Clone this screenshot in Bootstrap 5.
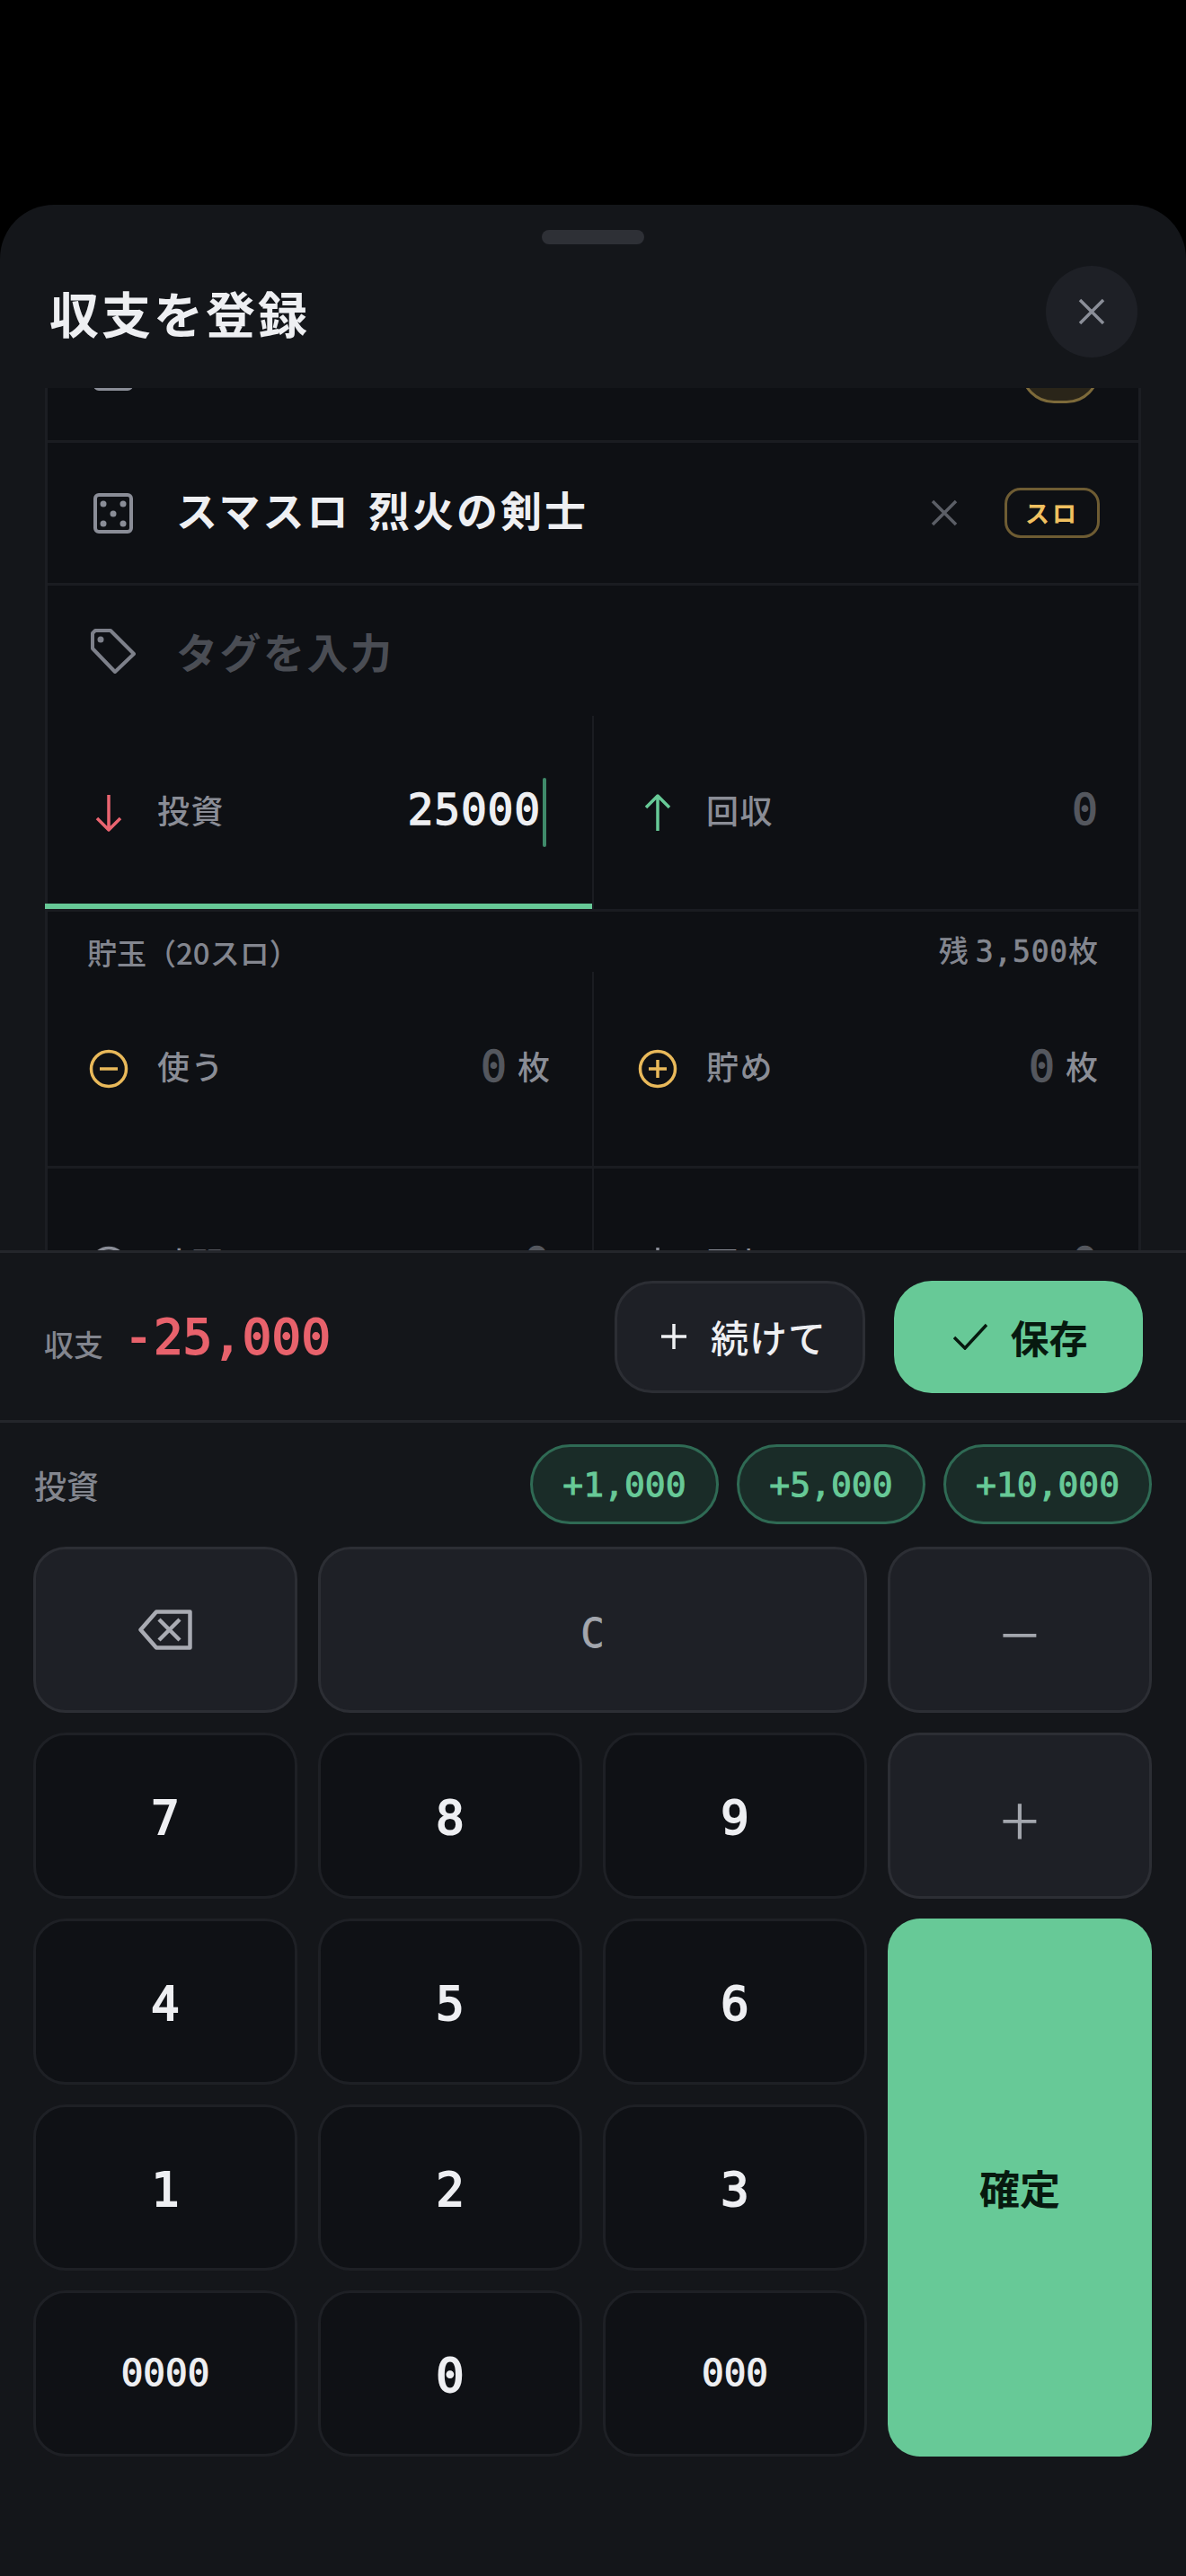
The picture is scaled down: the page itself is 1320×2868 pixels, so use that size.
<!DOCTYPE html>
<html lang="ja">
<head>
  <meta charset="UTF-8" />
  <meta name="viewport" content="width=device-width, initial-scale=1.0"/>
  <title>収支を登録</title>
  <link href="https://cdn.jsdelivr.net/npm/bootstrap@5.3.2/dist/css/bootstrap.min.css" rel="stylesheet">
  <style>
    html, body { height: 100%; }
    body {
      background: #000;
      overflow: hidden;
      font-family: "Noto Sans CJK JP", sans-serif;
      color: #eeeff2;
    }
    .mono { font-family: "DejaVu Sans Mono", "Noto Sans CJK JP", monospace; }

    .sheet {
      margin-top: 228px;
      height: 2640px;
      background: #14161a;
      border-radius: 60px 60px 0 0;
    }
    .grabber { width: 114px; height: 16px; margin: 28px auto 0; background: #2e3036; border-radius: 8px; }
    .sheet-head { height: 160px; padding: 24px 54px 0 55px; }
    .sheet-title { font-size: 55px; font-weight: 700; letter-spacing: 3px; line-height: 65px; margin: 19px 0 0; }
    .close-circle { width: 102px; height: 102px; border-radius: 50%; background: #1e2026; border: 0; padding: 0; }

    .scroller { height: 960px; overflow: hidden; padding: 0 50px; }
    .entry-card {
      margin-top: -98px;
      background: #0e1014;
      border-left: 3px solid #1c1e23;
      border-right: 3px solid #1c1e23;
    }
    .entry-row { height: 159px; border-bottom: 3px solid #1a1c21; padding: 0 43px 0 51px; }
    .entry-row .row-icon { width: 44px; flex: none; margin-right: 48px; }
    .game-name { font-size: 46px; font-weight: 700; letter-spacing: 3px; word-spacing: 6px; padding-bottom: 9px; }
    .game-badge {
      width: 106px; height: 56px; border-radius: 18px; border: 3px solid #6e5c33;
      color: #f0c060; font-size: 27px; font-weight: 700; letter-spacing: 3px;
    }
    .badge-stub { width: 88px; height: 74px; border-radius: 37px; background: #2a2519; border: 3px solid #7d6a3a; }
    .clear-x { margin-right: 52px; }

    .tag-row { height: 145px; padding-left: 48px; }
    .tag-row svg { margin-right: 45px; }
    .tag-hint { font-size: 46px; font-weight: 700; letter-spacing: 2.5px; color: #4a4d54; }

    .money-grid { display: grid; grid-template-columns: 606px 1fr; }
    .money-cell { height: 218px; border-bottom: 3px solid #1a1c21; position: relative; padding: 0 47px 0 46px; }
    .money-cell.right { border-left: 2px solid #1a1c21; padding: 0 45px 0 49px; }
    .money-cell.tall { height: 219px; }
    .money-cell.active::after {
      content: ""; position: absolute; left: -3px; right: 0; bottom: 0; height: 6px; background: #67c997;
    }
    .cell-icon { width: 44px; flex: none; margin-right: 32px; text-align: center; line-height: 0; }
    .cell-label { font-size: 36px; font-weight: 500; letter-spacing: 1.5px; color: #8a8d96; padding-bottom: 8px; }
    .cell-value { font-size: 48px; padding-bottom: 7px; -webkit-text-stroke: 1.3px currentColor; }
    .cell-value.filled { color: #eeeff2; letter-spacing: .8px; }
    .cell-value.empty { color: #54575e; }
    .cell-unit { font-size: 36px; font-weight: 500; color: #8a8d96; margin-left: 12px; padding-bottom: 8px; }
    .caret-bar { width: 4px; height: 77px; background: #3f8a6a; border-radius: 2px; margin: 0 4px 0 2px; }
    .stock-row { height: 67px; padding: 0 45px 2px 44px; font-size: 33px; font-weight: 500; color: #83868f; line-height: 40px; }
    .stock-num { letter-spacing: .8px; -webkit-text-stroke: .7px currentColor; margin-left: 8px; }

    .summary-bar { height: 192px; border-top: 3px solid #24262b; border-bottom: 3px solid #24262b; padding: 0 48px 0 49px; }
    .sum-label { font-size: 33px; font-weight: 500; color: #83868f; margin: 18px 23px 0 0; }
    .sum-value { font-size: 54px; color: #e8626c; letter-spacing: .4px; -webkit-text-stroke: 1.8px currentColor; }
    .act-btn {
      height: 125px; border-radius: 42px; font-size: 42px; line-height: 1; display: flex;
      align-items: center; justify-content: center; gap: 26px; padding: 0;
    }
    .act-btn.more { width: 279px; background: #1e2026; border: 3px solid #2c2e34; color: #eeeff2; font-weight: 500; letter-spacing: 1px; margin-right: 32px; padding-left: 8px; }
    .act-btn.save { width: 277px; background: #67c997; border: 0; color: #07190f; font-weight: 700; font-size: 43px; padding-left: 4px; }

    .quick-row { padding: 24px 38px 25px 38px; }
    .quick-label { font-size: 36px; font-weight: 500; color: #83868f; }
    .chip-set { gap: 20px; }
    .chip {
      height: 89px; border-radius: 45px; background: #1a2c28; border: 3px solid #2f6a54; color: #67c997;
      font-size: 38px; line-height: 1; padding: 0; -webkit-text-stroke: 1px currentColor;
    }
    .chip.w1 { width: 210px; }
    .chip.w2 { width: 232px; }

    .keypad {
      display: grid; grid-template-columns: repeat(4, 1fr); grid-auto-rows: 185px;
      gap: 22px 23px; padding: 0 38px 0 37px;
    }
    .key {
      border-radius: 36px; border: 3px solid #1e2025; background: #0f1115; color: #eeeff2;
      font-size: 52px; padding: 4px 0 0; line-height: 1; -webkit-text-stroke: 2px currentColor;
    }
    .key.small-digits { font-size: 41px; padding-top: 0; -webkit-text-stroke: 1.1px currentColor; }
    .key.fn { background: #1e2026; border-color: #2c2e34; color: #a3a6ad; font-size: 44px; padding-top: 8px; -webkit-text-stroke: .8px currentColor; }
    .key.fn.icon-key { padding-top: 0; }
    .key.fn.sign {
      font-family: "Noto Sans CJK JP", sans-serif; font-weight: 300; font-size: 80px; padding-top: 0;
      -webkit-text-stroke: 0;
    }
    .key.clear-wide { grid-column: span 2; }
    .key.ok {
      grid-column: 4; grid-row: 3 / span 3; background: #67c997; border: 0; color: #07190f;
      font-family: "Noto Sans CJK JP", sans-serif; font-size: 45px; font-weight: 700; padding-top: 0; -webkit-text-stroke: 0;
    }
  </style>
</head>
<body>

  <div class="sheet d-flex flex-column">
    <div class="grabber"></div>

    <!-- ヘッダー -->
    <div class="sheet-head d-flex justify-content-between align-items-start">
      <h1 class="sheet-title">収支を登録</h1>
      <button class="close-circle d-flex align-items-center justify-content-center" type="button" aria-label="閉じる">
        <svg width="30" height="30" viewBox="0 0 30 30" fill="none" stroke="#8b8e98" stroke-width="3.5"><path d="M2 2 28 28M28 2 2 28"/></svg>
      </button>
    </div>

    <!-- スクロール部分 -->
    <div class="scroller">
      <div class="entry-card">
        <div class="entry-row d-flex align-items-center">
          <svg class="row-icon" height="45" viewBox="0 0 44 45" fill="none" stroke="#8a8d97" stroke-width="4"><rect x="2" y="2" width="40" height="41" rx="4"/></svg>
          <div class="badge-stub ms-auto"></div>
        </div>

        <div class="entry-row d-flex align-items-center">
          <svg class="row-icon" height="45" viewBox="0 0 44 45" fill="none">
            <rect x="2" y="2" width="40" height="41" rx="4" stroke="#8a8d97" stroke-width="4"/>
            <g fill="#8a8d97">
              <circle cx="11" cy="12" r="3.5"/><circle cx="33" cy="12" r="3.5"/><circle cx="22" cy="23" r="3.5"/>
              <circle cx="11" cy="34" r="3.5"/><circle cx="33" cy="34" r="3.5"/>
            </g>
          </svg>
          <div class="game-name">スマスロ 烈火の剣士</div>
          <svg class="clear-x ms-auto" width="30" height="30" viewBox="0 0 30 30" fill="none" stroke="#5b5e66" stroke-width="3.5"><path d="M2 2 28 28M28 2 2 28"/></svg>
          <div class="game-badge d-flex align-items-center justify-content-center">スロ</div>
        </div>

        <div class="tag-row d-flex align-items-center">
          <svg width="50" height="50" viewBox="0 0 50 50" fill="none">
            <path d="M5 2H22L48 28 27 48 2 22V5Z" stroke="#7d808a" stroke-width="4" stroke-linejoin="round"/>
            <circle cx="11" cy="12" r="3.5" fill="#7d808a"/>
          </svg>
          <div class="tag-hint">タグを入力</div>
        </div>

        <div class="money-grid">
          <div class="money-cell active d-flex align-items-center">
            <div class="cell-icon">
              <svg width="30" height="42" viewBox="0 0 30 42" fill="none" stroke="#ea6470" stroke-width="3.5" stroke-linejoin="round"><path d="M15 1V40M2 27 15 40 28 27"/></svg>
            </div>
            <div class="cell-label">投資</div>
            <div class="cell-value filled mono ms-auto">25000</div>
            <div class="caret-bar"></div>
          </div>
          <div class="money-cell right d-flex align-items-center">
            <div class="cell-icon">
              <svg width="30" height="42" viewBox="0 0 30 42" fill="none" stroke="#67c997" stroke-width="3.5" stroke-linejoin="round"><path d="M15 41V2M2 15 15 2 28 15"/></svg>
            </div>
            <div class="cell-label">回収</div>
            <div class="cell-value empty mono ms-auto">0</div>
          </div>
        </div>

        <div class="stock-row d-flex justify-content-between align-items-end">
          <div>貯玉（<span>20</span>スロ）</div>
          <div>残<span class="mono stock-num">3,500</span>枚</div>
        </div>

        <div class="money-grid">
          <div class="money-cell tall d-flex align-items-center">
            <div class="cell-icon">
              <svg width="44" height="44" viewBox="0 0 44 44" fill="none" stroke="#e9b95a" stroke-width="3.5"><circle cx="22" cy="22" r="19.5"/><path d="M12 22H32"/></svg>
            </div>
            <div class="cell-label">使う</div>
            <div class="cell-value empty mono ms-auto">0</div>
            <div class="cell-unit">枚</div>
          </div>
          <div class="money-cell tall right d-flex align-items-center">
            <div class="cell-icon">
              <svg width="44" height="44" viewBox="0 0 44 44" fill="none" stroke="#e9b95a" stroke-width="3.5"><circle cx="22" cy="22" r="19.5"/><path d="M12 22H32M22 12V32"/></svg>
            </div>
            <div class="cell-label">貯め</div>
            <div class="cell-value empty mono ms-auto">0</div>
            <div class="cell-unit">枚</div>
          </div>
          <div class="money-cell tall d-flex align-items-center">
            <div class="cell-icon">
              <svg width="44" height="44" viewBox="0 0 44 44" fill="none" stroke="#8a8d97" stroke-width="3.5"><circle cx="22" cy="22" r="19.5"/></svg>
            </div>
            <div class="cell-label">時間</div>
            <div class="cell-value empty mono ms-auto">0</div>
          </div>
          <div class="money-cell tall right d-flex align-items-center">
            <div class="cell-icon">
              <svg width="30" height="42" viewBox="0 0 30 42" fill="none" stroke="#8a8d97" stroke-width="3.5"><path d="M15 1V40"/></svg>
            </div>
            <div class="cell-label">回転</div>
            <div class="cell-value empty mono ms-auto">0</div>
          </div>
        </div>
      </div>
    </div>

    <!-- 収支バー -->
    <div class="summary-bar d-flex align-items-center">
      <span class="sum-label">収支</span>
      <span class="sum-value mono">-25,000</span>
      <button class="btn act-btn more ms-auto" type="button">
        <svg width="30" height="30" viewBox="0 0 30 30" fill="none" stroke="#eeeff2" stroke-width="3.5"><path d="M15 1V29M1 15H29"/></svg>
        続けて
      </button>
      <button class="btn act-btn save" type="button">
        <svg width="38" height="30" viewBox="0 0 38 30" fill="none" stroke="#07190f" stroke-width="3.5"><path d="M1 16 13 28 37 2"/></svg>
        保存
      </button>
    </div>

    <!-- クイック加算 -->
    <div class="quick-row d-flex align-items-center">
      <span class="quick-label me-auto">投資</span>
      <div class="chip-set d-flex">
        <button class="btn chip w1 mono" type="button">+1,000</button>
        <button class="btn chip w1 mono" type="button">+5,000</button>
        <button class="btn chip w2 mono" type="button">+10,000</button>
      </div>
    </div>

    <!-- テンキー -->
    <div class="keypad mono">
      <button class="btn key fn icon-key d-flex align-items-center justify-content-center" type="button" aria-label="削除">
        <svg width="60" height="45" viewBox="0 0 60 45" fill="none" stroke="#a9abb3" stroke-width="4.5" stroke-linejoin="round"><path d="M20 2.5H57.5V42.5H20L2.5 22.5Z"/><path d="M23 11 46 34M46 11 23 34"/></svg>
      </button>
      <button class="btn key fn clear-wide mono" type="button">C</button>
      <button class="btn key fn sign" type="button">−</button>
      <button class="btn key mono" type="button">7</button>
      <button class="btn key mono" type="button">8</button>
      <button class="btn key mono" type="button">9</button>
      <button class="btn key fn sign" type="button">+</button>
      <button class="btn key mono" type="button">4</button>
      <button class="btn key mono" type="button">5</button>
      <button class="btn key mono" type="button">6</button>
      <button class="btn key ok" type="button">確定</button>
      <button class="btn key mono" type="button">1</button>
      <button class="btn key mono" type="button">2</button>
      <button class="btn key mono" type="button">3</button>
      <button class="btn key small-digits mono" type="button">0000</button>
      <button class="btn key mono" type="button">0</button>
      <button class="btn key small-digits mono" type="button">000</button>
    </div>
  </div>

  <script src="https://cdn.jsdelivr.net/npm/bootstrap@5.3.2/dist/js/bootstrap.bundle.min.js"></script>
</body>
</html>
